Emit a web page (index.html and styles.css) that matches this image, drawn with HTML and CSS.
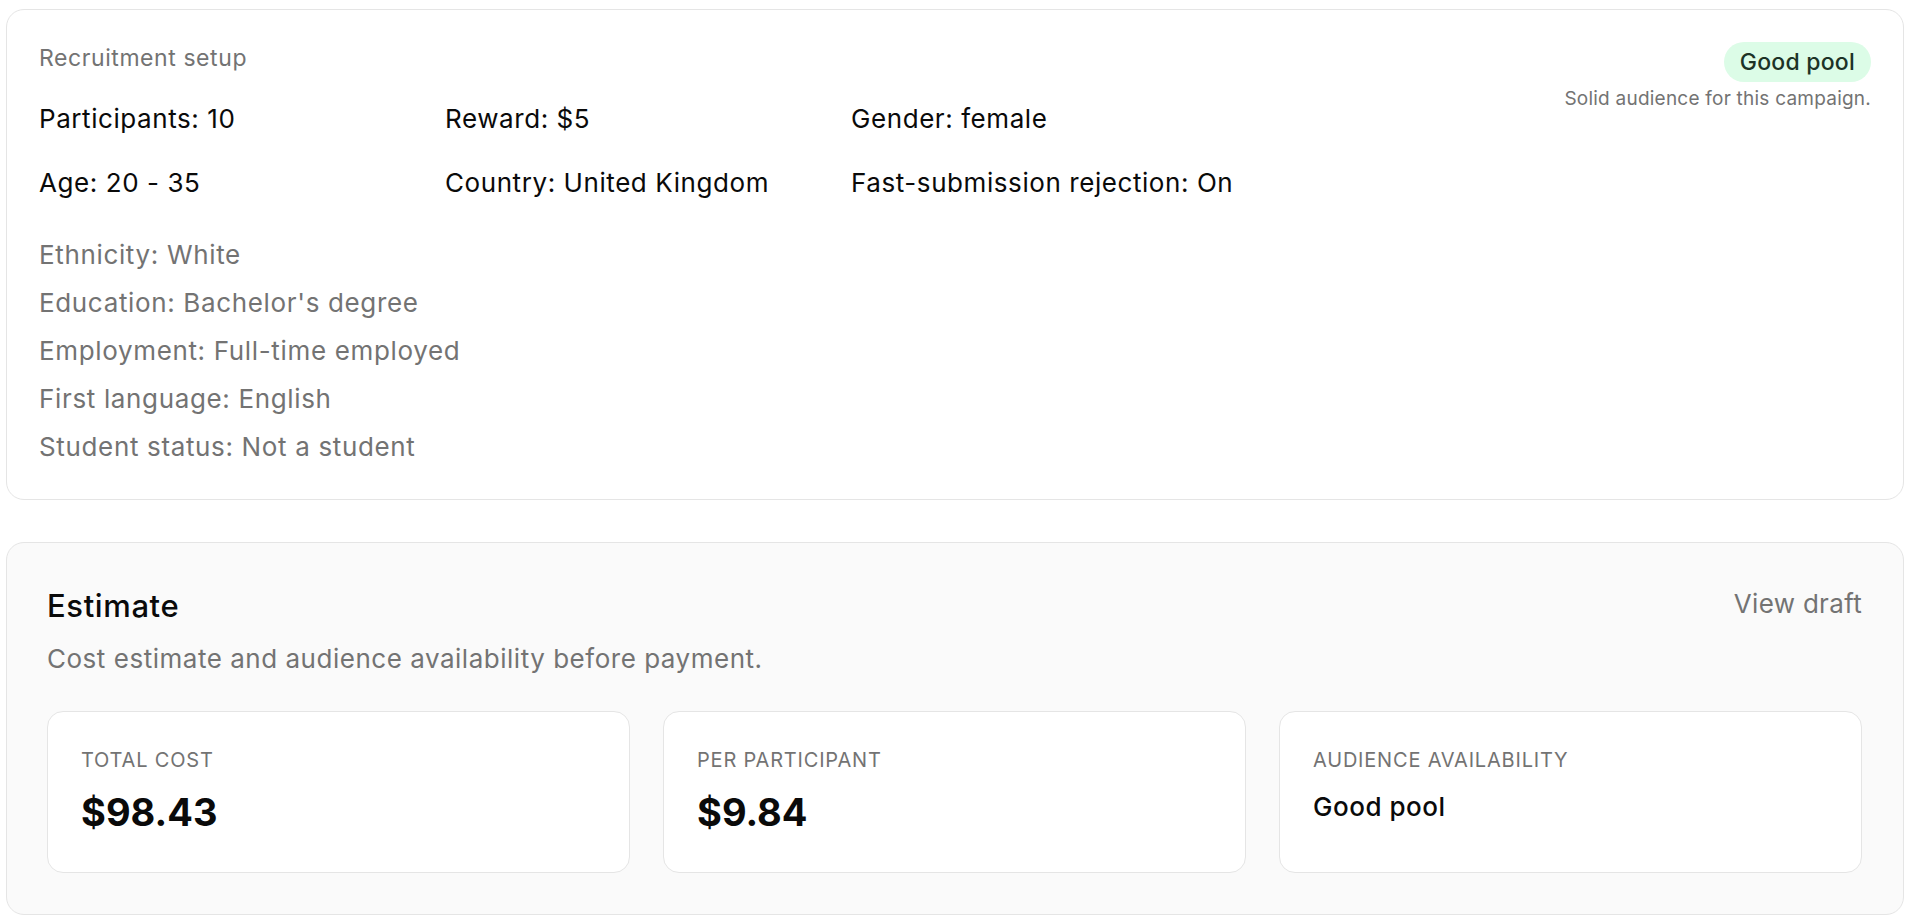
FILE: index.html
```html
<!DOCTYPE html>
<html lang="en">
<head>
<meta charset="utf-8">
<title>Recruitment setup</title>
<link rel="stylesheet" href="styles.css">
</head>
<body>
<main class="page">
  <section class="card setup">
    <div class="setup-main">
      <div class="setup-title">Recruitment setup</div>
      <div class="setup-grid">
        <div class="field">Participants: 10</div>
        <div class="field">Reward: $5</div>
        <div class="field">Gender: female</div>
        <div class="field">Age: 20 - 35</div>
        <div class="field">Country: United Kingdom</div>
        <div class="field">Fast-submission rejection: On</div>
      </div>
      <ul class="extra">
        <li>Ethnicity: White</li>
        <li>Education: Bachelor's degree</li>
        <li>Employment: Full-time employed</li>
        <li>First language: English</li>
        <li>Student status: Not a student</li>
      </ul>
    </div>
    <div class="setup-status">
      <span class="badge">Good pool</span>
      <span class="status-note">Solid audience for this campaign.</span>
    </div>
  </section>

  <section class="card estimate">
    <div class="estimate-head">
      <h2 class="estimate-title">Estimate</h2>
      <a class="view-draft" href="#">View draft</a>
    </div>
    <p class="estimate-sub">Cost estimate and audience availability before payment.</p>
    <div class="stats">
      <div class="stat">
        <div class="stat-label">Total cost</div>
        <div class="stat-value">$98.43</div>
      </div>
      <div class="stat">
        <div class="stat-label">Per participant</div>
        <div class="stat-value">$9.84</div>
      </div>
      <div class="stat">
        <div class="stat-label">Audience availability</div>
        <div class="stat-text">Good pool</div>
      </div>
    </div>
  </section>
</main>
</body>
</html>
```

FILE: styles.css
```css
* { box-sizing: border-box; }

body {
  margin: 0;
  background: #ffffff;
  font-family: Inter, "Liberation Sans", sans-serif;
  color: #0a0a0a;
}

.page {
  padding: 9px 10px 6px 6px;
  display: flex;
  flex-direction: column;
  gap: 42px;
}

.card {
  border: 1px solid #e5e5e5;
  border-radius: 18px;
}

/* Recruitment setup */
.setup {
  background: #ffffff;
  padding: 32px 32px 36px 32px;
  display: flex;
  justify-content: space-between;
  align-items: flex-start;
}

.setup-title {
  font-size: 23px;
  line-height: 32px;
  letter-spacing: 0.025em;
  color: #737373;
}

.setup-grid {
  margin-top: 29px;
  display: grid;
  grid-template-columns: 406px 406px 406px;
  row-gap: 32px;
}

.field {
  font-size: 26px;
  line-height: 32px;
  letter-spacing: 0.022em;
  color: #0a0a0a;
}

.extra {
  list-style: none;
  margin: 40px 0 0 0;
  padding: 0;
  display: flex;
  flex-direction: column;
  gap: 16px;
}

.extra li {
  font-size: 26px;
  line-height: 32px;
  letter-spacing: 0.025em;
  color: #737373;
}

.setup-status {
  display: flex;
  flex-direction: column;
  align-items: flex-end;
  gap: 6px;
}

.badge {
  display: inline-flex;
  align-items: center;
  height: 40px;
  padding: 0 16px;
  border-radius: 999px;
  background: #dcfce7;
  color: #1c3326;
  font-size: 23px;
  font-weight: 500;
  letter-spacing: 0.01em;
}

.status-note {
  font-size: 19px;
  line-height: 22px;
  letter-spacing: 0.012em;
  color: #737373;
}

/* Estimate */
.estimate {
  background: #fafafa;
  padding: 40px 41px 41px 40px;
}

.estimate-head {
  margin-top: 6px;
  display: flex;
  justify-content: space-between;
  align-items: flex-start;
}

.estimate-title {
  margin: 0;
  font-size: 31px;
  line-height: 34px;
  font-weight: 500;
  letter-spacing: 0.02em;
  color: #0a0a0a;
}

.view-draft {
  font-size: 26px;
  line-height: 30px;
  letter-spacing: 0.012em;
  color: #737373;
  text-decoration: none;
}

.estimate-sub {
  margin: 20px 0 0 0;
  font-size: 26px;
  line-height: 32px;
  letter-spacing: 0.02em;
  color: #737373;
}

.stats {
  margin-top: 36px;
  display: grid;
  grid-template-columns: repeat(3, 1fr);
  gap: 33px;
}

.stat {
  background: #ffffff;
  border: 1px solid #e5e5e5;
  border-radius: 16px;
  padding: 36px 32px 36px 33px;
}

.stat-label {
  font-size: 20px;
  line-height: 24px;
  letter-spacing: 0.04em;
  color: #737373;
  text-transform: uppercase;
}

.stat-value {
  margin-top: 16px;
  font-size: 38px;
  line-height: 48px;
  font-weight: 700;
  color: #0a0a0a;
}

.stat-text {
  margin-top: 16px;
  font-size: 26px;
  line-height: 38px;
  font-weight: 500;
  letter-spacing: 0.02em;
  color: #0a0a0a;
}
```
